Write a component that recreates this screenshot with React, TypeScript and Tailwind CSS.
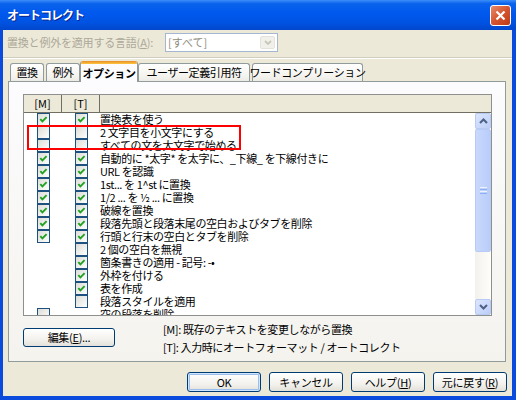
import React from 'react';

const FONT = "font-['Noto_Sans_CJK_JP','Noto_Sans_CJK_SC',sans-serif]";

type Row = { label: string; m: boolean | null; t: boolean | null };

const rows: Row[] = [
  { label: '置換表を使う', m: true, t: true },
  { label: '2 文字目を小文字にする', m: false, t: false },
  { label: 'すべての文を大文字で始める', m: false, t: false },
  { label: '自動的に *太字* を太字に、_下線_ を下線付きに', m: true, t: true },
  { label: 'URL を認識', m: true, t: true },
  { label: '1st... を 1^st に置換', m: true, t: true },
  { label: '1/2 ... を ½ ... に置換', m: true, t: true },
  { label: '破線を置換', m: true, t: true },
  { label: '段落先頭と段落末尾の空白およびタブを削除', m: true, t: true },
  { label: '行頭と行末の空白とタブを削除', m: true, t: true },
  { label: '2 個の空白を無視', m: null, t: false },
  { label: '箇条書きの適用 - 記号: -•', m: null, t: true },
  { label: '外枠を付ける', m: null, t: true },
  { label: '表を作成', m: null, t: true },
  { label: '段落スタイルを適用', m: null, t: false },
  { label: '空の段落を削除', m: false, t: null },
];

const Check = ({ checked }: { checked: boolean }) => (
  <div className="w-[13px] h-[13px] border border-[#1C5180] bg-[linear-gradient(135deg,#DCDCD7,#FFFFFF)] flex items-center justify-center">
    {checked && (
      <svg width="9" height="9" viewBox="0 0 9 9">
        <path d="M1.3 4.2 L3.4 6.4 L7.6 2.2" stroke="#21A121" strokeWidth="1.9" fill="none" />
      </svg>
    )}
  </div>
);

const XpButton = ({ children, className = '', isDefault = false }: { children: React.ReactNode; className?: string; isDefault?: boolean }) => (
  <div
    className={`flex items-center justify-center border border-[#003C74] rounded-[3px] bg-[linear-gradient(to_bottom,#FFFFFF,#F3F2EE_60%,#E3E1D8)] text-[11px] tracking-[-0.3px] whitespace-nowrap text-black ${
      isDefault ? 'shadow-[inset_0_0_0_1px_#CEE7FF,inset_0_0_0_2px_#9DBDEF]' : ''
    } ${className}`}
  >
    {children}
  </div>
);

const Tab = ({ label, w, selected = false, ml = 0 }: { label: string; w: string; selected?: boolean; ml?: number }) =>
  selected ? (
    <div className={`${w} h-[21px] -mb-[1px] flex flex-col border-x border-[#919B9C] rounded-t-[3px] bg-[#FCFCFE] overflow-hidden`}>
      <div className="h-[3px] bg-[linear-gradient(to_bottom,#E68B2C,#FFC73C)]" />
      <div className="flex-1 flex items-center justify-center text-[11px] tracking-[-0.4px] whitespace-nowrap font-bold text-black">{label}</div>
    </div>
  ) : (
    <div
      className={`${w} ${ml === 2 ? 'ml-[2px]' : ''} h-[18px] flex items-center justify-center border border-b-0 border-[#919B9C] rounded-t-[3px] bg-[linear-gradient(to_bottom,#FFFFFF,#F4F3EE_70%,#ECEBE6)] text-[11px] tracking-[-0.4px] whitespace-nowrap text-black`}
    >
      {label}
    </div>
  );

const ScrollArrow = ({ up }: { up: boolean }) => (
  <div className="h-[16px] w-[16px] rounded-[2px] border border-[#B7CBF5] bg-[linear-gradient(135deg,#DCE6FD,#BCCEF8)] flex items-center justify-center">
    <svg width="9" height="6" viewBox="0 0 9 6">
      <path d={up ? 'M1 5 L4.5 1.5 L8 5' : 'M1 1 L4.5 4.5 L8 1'} stroke="#4D6185" strokeWidth="2" fill="none" />
    </svg>
  </div>
);

export default function App() {
  return (
    <div className={`${FONT} w-[516px] h-[400px] relative flex flex-col bg-[#0A4BDD] overflow-hidden`}>
      {/* title bar */}
      <div className="h-[30px] shrink-0 flex items-center justify-between pl-[7px] pr-[5px] bg-[linear-gradient(to_bottom,#3E8EF8_0%,#0A63EC_12%,#0058EE_45%,#0053E2_75%,#0247CC_100%)]">
        <span className="text-[12px] font-bold tracking-[-1px] text-white [text-shadow:1px_1px_0_#0C238A]">オートコレクト</span>
        <div className="w-[21px] h-[21px] rounded-[3px] border border-white bg-[linear-gradient(135deg,#E88A6C,#D5542F_50%,#BE3A14)] flex items-center justify-center">
          <svg width="11" height="11" viewBox="0 0 11 11">
            <path d="M1.5 1.5 L9.5 9.5 M9.5 1.5 L1.5 9.5" stroke="white" strokeWidth="2.2" />
          </svg>
        </div>
      </div>

      {/* body */}
      <div className="flex-1 ml-[3px] mr-[4px] mb-[4px] bg-[#ECE9D8] flex flex-col">
        <div className="flex items-center pt-[3px] pl-[4px]">
          <div className="w-[158px] shrink-0 text-[11px] tracking-[-0.2px] whitespace-nowrap text-[#ACA899]">
            置換と例外を適用する言語(<span className="underline">A</span>):
          </div>
          <div className="w-[113px] h-[19px] border border-[#A5B7CE] bg-white flex items-center justify-between pl-[2px] pr-[2px]">
            <span className="text-[11px] text-[#8F8D80]">[すべて]</span>
            <div className="w-[15px] h-[13px] rounded-[2px] border border-[#E3E2DB] bg-[#F1F0EA] flex items-center justify-center">
              <svg width="8" height="5" viewBox="0 0 8 5">
                <path d="M1 1 L4 4 L7 1" stroke="#C9C7BA" strokeWidth="1.8" fill="none" />
              </svg>
            </div>
          </div>
        </div>

        <div className="mt-[5px] border-t border-t-[#D0CEBF] border-b border-b-white" />

        {/* tabs */}
        <div className="mt-[2px] h-[20px] flex items-end pl-[7px] relative z-10">
          <Tab label="置換" w="w-[34px]" />
          <Tab label="例外" w="w-[34px]" ml={2} />
          <Tab label="オプション" w="w-[58px]" selected />
          <Tab label="ユーザー定義引用符" w="w-[112px]" />
          <Tab label="ワードコンプリーション" w="w-[111px]" ml={2} />
        </div>

        {/* tab panel */}
        <div className="ml-[5px] w-[498px] h-[281px] border border-[#919B9C] bg-[linear-gradient(to_bottom,#FCFCFE,#F4F3EE)] pt-[12px] pl-[14px]">
          <div className="w-[469px] h-[222px] border border-[#8E8F8F] bg-white flex flex-col">
            <div className="h-[18px] shrink-0 flex bg-[#ECE9D8] border-b border-[#716F64] text-[11px] text-black">
              <div className="w-[38px] flex items-center justify-center border-r border-[#716F64]">[M]</div>
              <div className="w-[38px] flex items-center justify-center border-r border-[#716F64]">[T]</div>
              <div className="flex-1" />
            </div>
            <div className="flex-1 min-h-0 flex">
              <div className="flex-1 overflow-hidden">
                {rows.map((r) => (
                  <div key={r.label} className="h-[13px] flex items-center">
                    <div className="w-[38px] flex justify-center">{r.m !== null && <Check checked={r.m} />}</div>
                    <div className="w-[38px] flex justify-center">{r.t !== null && <Check checked={r.t} />}</div>
                    <span className="text-[11px] leading-[13px] tracking-[-0.4px] whitespace-nowrap text-black">{r.label}</span>
                  </div>
                ))}
              </div>
              <div className="w-[16px] flex flex-col bg-[linear-gradient(to_right,#F3F1EC,#FEFEFB)]">
                <ScrollArrow up />
                <div className="h-[123px] rounded-[2px] border border-[#B7CBF5] bg-[linear-gradient(to_right,#C9D8FC,#B9CDFA)] flex items-center justify-center">
                  <div className="flex flex-col gap-[1px]">
                    <div className="w-[7px] h-[1px] bg-[#EEF4FE]" />
                    <div className="w-[7px] h-[1px] bg-[#8CB0F8]" />
                    <div className="w-[7px] h-[1px] bg-[#EEF4FE]" />
                    <div className="w-[7px] h-[1px] bg-[#8CB0F8]" />
                  </div>
                </div>
                <div className="flex-1" />
                <ScrollArrow up={false} />
              </div>
            </div>
          </div>

          <div className="mt-[4px] flex items-start">
            <XpButton className="mt-[8px] w-[92px] h-[19px]">
              編集(<span className="underline">E</span>)...
            </XpButton>
            <div className="ml-[48px] text-[11px] leading-[18px] tracking-[-0.4px] whitespace-nowrap text-black">
              <div>[M]: 既存のテキストを変更しながら置換</div>
              <div>[T]: 入力時にオートフォーマット / オートコレクト</div>
            </div>
          </div>
        </div>

        {/* dialog buttons */}
        <div className="mt-[10px] flex justify-end gap-[8px] pr-[5px]">
          <XpButton className="w-[74px] h-[20px]" isDefault>OK</XpButton>
          <XpButton className="w-[74px] h-[20px]">キャンセル</XpButton>
          <XpButton className="w-[74px] h-[20px]">
            ヘルプ(<span className="underline">H</span>)
          </XpButton>
          <XpButton className="w-[74px] h-[20px]">
            元に戻す(<span className="underline">R</span>)
          </XpButton>
        </div>
      </div>

      {/* red annotation box */}
      <div className="absolute left-[27px] top-[125px] w-[214px] h-[25px] border-2 border-[#FF0000]" />
    </div>
  );
}
